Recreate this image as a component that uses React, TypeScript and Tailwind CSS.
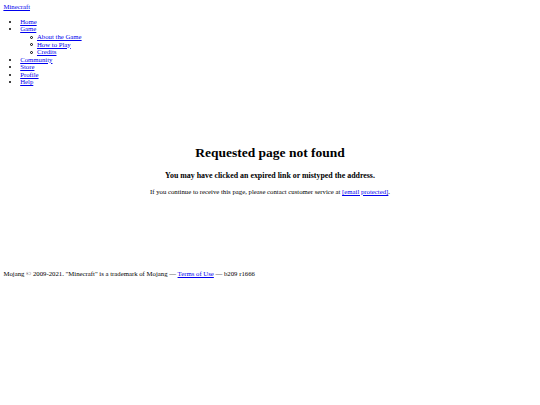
export default function App() {
  const link = "text-[#0000ee] underline";
  const sub = ["About the Game", "How to Play", "Credits"];
  return (
    <div className="min-h-[405px] bg-white p-[3.4px] text-black font-['Liberation_Serif',serif] text-[6.75px] leading-[7.6px]">
      <div>
        <a href="#" className={link}>Minecraft</a>
      </div>
      <ul className="my-[6.75px] pl-[16.8px] list-disc">
        <li><a href="#" className={link}>Home</a></li>
        <li>
          <a href="#" className={link}>Game</a>
          <ul className="pl-[16.8px] list-none">
            {sub.map((s) => (
              <li key={s} className="relative">
                <span className="absolute left-[-6.5px] top-[2.6px] w-[3px] h-[3px] rounded-full border-[0.6px] border-black" />
                <a href="#" className={link}>{s}</a>
              </li>
            ))}
          </ul>
        </li>
        <li><a href="#" className={link}>Community</a></li>
        <li><a href="#" className={link}>Store</a></li>
        <li><a href="#" className={link}>Profile</a></li>
        <li><a href="#" className={link}>Help</a></li>
      </ul>
      <div className="mt-[59px] text-center">
        <h1 className="text-[13.5px] leading-[15.5px] font-bold">Requested page not found</h1>
        <h3 className="mt-[10px] text-[7.9px] leading-[9px] font-bold">
          You may have clicked an expired link or mistyped the address.
        </h3>
        <p className="mt-[8px]">
          If you continue to receive this page, please contact customer service at{" "}
          <a href="#" className={link}>[email&#160;protected]</a>.
        </p>
      </div>
      <p className="mt-[75px]">
        Mojang © 2009-2021. "Minecraft" is a trademark of Mojang — <a href="#" className={link}>Terms of Use</a> — b209 r1666
      </p>
    </div>
  );
}
